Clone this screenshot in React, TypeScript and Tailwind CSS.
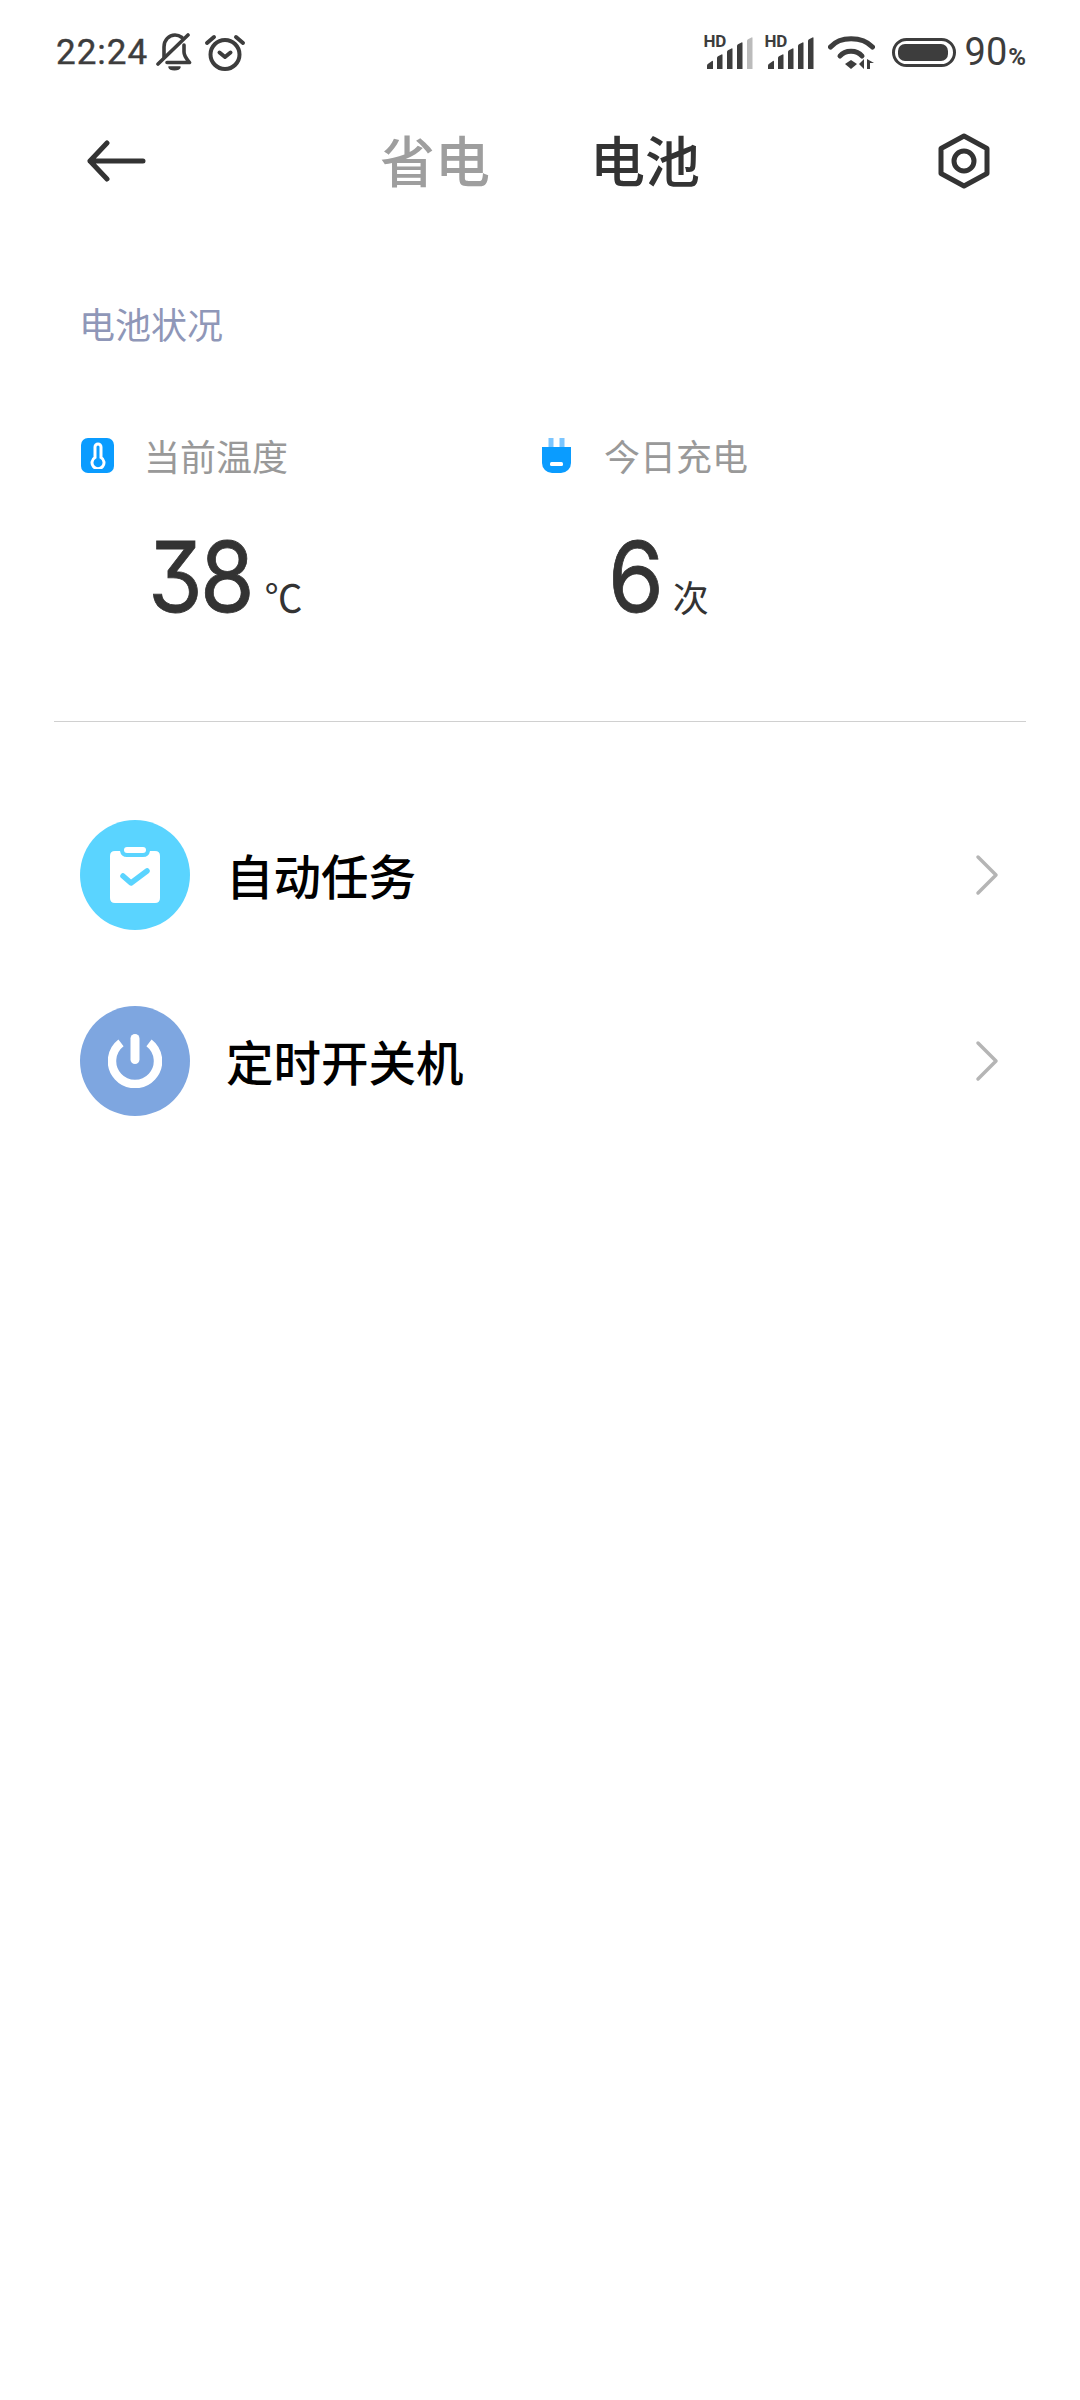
import React from 'react';

const cjk = "font-['Noto_Sans_CJK_SC','Noto_Sans',sans-serif]";

const SignalIcon = ({ weakLast }: { weakLast?: boolean }) => (
  <div className="relative w-[50px] h-[35px] text-[#3d3d3d]">
    <span className="absolute left-0 top-[-2px] font-['Roboto',sans-serif] font-bold text-[17px] leading-[17px] tracking-[-0.2px]">HD</span>
    <svg width="50" height="35" viewBox="0 0 50 35" className="block">
      <path d="M3 34v-3.500q0-1 .8-1.600l4.200-2.900q1-.6 1 .5V34Z" fill="currentColor" />
      <path d="M13 34V23q0-1 1-1.700l3.500-1.800q1-.5 1 .6V34Z" fill="currentColor" />
      <path d="M23 34V17q0-1 1-1.700l3.500-1.800q1-.5 1 .6V34Z" fill="currentColor" />
      <path d="M33 34V11q0-1 1-1.700l3.500-1.800q1-.5 1 .6V34Z" fill="currentColor" />
      <path d="M43 34V6q0-1 1-1.700l3.500-1.800q1-.5 1 .6V34Z" fill="currentColor" opacity={weakLast ? 0.35 : 1} />
    </svg>
  </div>
);

export default function App() {
  return (
    <div className={`w-[1080px] h-[2400px] bg-white flex flex-col ${cjk}`}>
      {/* status bar */}
      <div className="h-[64px] mt-[20px] pl-[56px] pr-[54px] flex items-center justify-between text-[#3d3d3d]">
        <div className="flex items-center">
          <span className="font-['Roboto',sans-serif] text-[35px] leading-none tracking-[1px] [-webkit-text-stroke:0.4px_#3d3d3d]">22:24</span>
          <svg width="36" height="40" viewBox="0 0 36 40" fill="none" stroke="currentColor" strokeWidth="3.600" strokeLinecap="round" strokeLinejoin="round" className="ml-[8px]">
            <path d="M8 25V15C8 8 13 3 19 3c3 0 5 1 7 2.500" />
            <path d="M28 13v7c0 4 2 6 5.500 10.500H11" />
            <path d="M2 32 32 3" />
            <path d="M13 35h11c-1 3.500-10 3.500-11 0Z" fill="currentColor" strokeWidth="1.500" />
          </svg>
          <svg width="42" height="38" viewBox="0 0 42 38" fill="none" stroke="currentColor" strokeWidth="4" strokeLinecap="round" strokeLinejoin="round" className="ml-[12px]">
            <circle cx="21" cy="21.500" r="14.500" />
            <path d="M15.500 19.500 21 24l5.500-4.500" />
            <path d="M3 10 10 4M39 10 32 4" />
          </svg>
        </div>
        <div className="flex items-center">
          <SignalIcon weakLast />
          <div className="ml-[11px]"><SignalIcon /></div>
          <svg width="47" height="36" viewBox="0 0 47 36" fill="none" stroke="currentColor" className="ml-[13px]">
            <path d="M2.500 13C12 2 34 2 44.500 13" strokeWidth="5" strokeLinecap="round" />
            <path d="M12 22c5-6.500 17-6.500 22 0" strokeWidth="5" strokeLinecap="round" />
            <path d="M17 30l6-4 6 4-6 5Z" fill="currentColor" stroke="none" />
            <path d="M36 25v10l-5-5ZM39 25v10h3v-6h4Z" fill="currentColor" stroke="none" />
          </svg>
          <div className="ml-[17px] w-[64px] h-[29px] rounded-full border-[3px] border-[#3d3d3d] flex items-center p-[3px]">
            <div className="h-full w-[50px] bg-[#3d3d3d] rounded-[7px]" />
          </div>
          <span className="ml-[9px] font-['Roboto',sans-serif] text-[38px] leading-none">90</span>
          <span className="ml-[1px] font-['Roboto',sans-serif] font-bold text-[24px] leading-none mt-[9px]">%</span>
        </div>
      </div>

      {/* header */}
      <div className="h-[104px] mt-[22px] relative flex items-center justify-center">
        <svg width="60" height="44" viewBox="0 0 60 44" fill="none" stroke="#333333" strokeWidth="5" strokeLinecap="round" strokeLinejoin="round" className="absolute left-[87px] top-[33px]">
          <path d="M56 22H3M20 4 3 22l17 18" />
        </svg>
        <div className="flex items-center gap-[100px] text-[55px] leading-none font-medium">
          <span className="text-[#9e9e9e]">省电</span>
          <span className="text-[#333333]">电池</span>
        </div>
        <svg width="52" height="56" viewBox="0 0 52 56" fill="none" stroke="#333333" strokeWidth="5" strokeLinejoin="round" className="absolute left-[938px] top-[27px]">
          <path d="M26 3 49 15.500v25L26 53 3 40.500v-25Z" />
          <circle cx="26" cy="28" r="10" />
        </svg>
      </div>

      {/* battery status */}
      <div className="mt-[95px] pl-[79px] text-[36px] leading-none text-[#8f97b8]">电池状况</div>

      <div className="mt-[96px] pl-[81px] flex">
        <div className="w-[461px]">
          <div className="flex items-center h-[36px]">
            <div className="w-[33px] h-[35px] rounded-[7px] bg-[#0a9cff] flex items-center justify-center">
              <svg width="16" height="27" viewBox="0 0 16 27" fill="none" stroke="white" strokeWidth="3">
                <path d="M5 15.500V5a3 3 0 0 1 6 0v10.500a6 6 0 1 1-6 0Z" />
              </svg>
            </div>
            <span className="ml-[30px] text-[36px] leading-none text-[#999999]">当前温度</span>
          </div>
          <div className="mt-[55px] pl-[67px] flex items-baseline text-[#333333]">
            <span className="inline-block origin-left scale-x-[0.9] font-['Inter',sans-serif] font-normal text-[98px] leading-none tracking-[-3px] [-webkit-text-stroke:0.8px_#333333] [font-feature-settings:'cv09']">38</span>
            <span className="ml-[1px] text-[38px] leading-none">℃</span>
          </div>
        </div>
        <div>
          <div className="flex items-center h-[36px]">
            <svg width="29" height="35" viewBox="0 0 29 35" className="block">
              <path d="M6.500 0h5v10h-5ZM17.500 0h5v10h-5Z" fill="#7cc6ff" />
              <path d="M0 9h29v16a10 10 0 0 1-10 10H10A10 10 0 0 1 0 25Z" fill="#0a9cff" />
              <rect x="8" y="24" width="13" height="4" rx="1.500" fill="white" />
            </svg>
            <span className="ml-[33px] text-[36px] leading-none text-[#999999]">今日充电</span>
          </div>
          <div className="mt-[55px] pl-[66px] flex items-baseline text-[#333333]">
            <span className="inline-block origin-left scale-x-[0.92] font-['Inter',sans-serif] font-normal text-[98px] leading-none [-webkit-text-stroke:0.8px_#333333]">6</span>
            <span className="ml-[4px] text-[36px] leading-none">次</span>
          </div>
        </div>
      </div>

      <div className="mt-[95px] mx-[54px] h-px bg-[#d0d0d0]" />

      {/* list */}
      <div className="mt-[98px] pl-[80px] pr-[81px] flex flex-col gap-[76px]">
        <div className="flex items-center h-[110px]">
          <div className="w-[110px] h-[110px] rounded-full bg-[#5ad4ff] flex items-center justify-center">
            <svg width="50" height="56" viewBox="0 0 50 56" className="block">
              <path d="M5 4h5q1 6 7 6h16q6 0 7-6h5q5 0 5 5v42q0 5-5 5H5q-5 0-5-5V9q0-5 5-5Z" fill="white" />
              <rect x="14" y="0" width="22" height="6" rx="3" fill="white" />
              <path d="M13 29 21 36 37 24" fill="none" stroke="#5ad4ff" strokeWidth="5.500" strokeLinecap="round" strokeLinejoin="round" />
            </svg>
          </div>
          <span className="ml-[36px] text-[47.500px] leading-none font-medium text-black flex-1">自动任务</span>
          <svg width="24" height="42" viewBox="0 0 24 42" fill="none" stroke="#b5b5b5" strokeWidth="3.500" strokeLinecap="round" strokeLinejoin="round">
            <path d="M3 3 21 21 3 39" />
          </svg>
        </div>
        <div className="flex items-center h-[110px]">
          <div className="w-[110px] h-[110px] rounded-full bg-[#7ea6e0] flex items-center justify-center">
            <svg width="54" height="54" viewBox="0 0 54 54" fill="none" stroke="white" className="block">
              <path d="M13 8.800A23 23 0 1 0 41 8.800" strokeWidth="8.500" />
              <path d="M27 4.500V25.500" strokeWidth="9" strokeLinecap="round" />
            </svg>
          </div>
          <span className="ml-[36px] text-[47.500px] leading-none font-medium text-black flex-1">定时开关机</span>
          <svg width="24" height="42" viewBox="0 0 24 42" fill="none" stroke="#b5b5b5" strokeWidth="3.500" strokeLinecap="round" strokeLinejoin="round">
            <path d="M3 3 21 21 3 39" />
          </svg>
        </div>
      </div>
    </div>
  );
}
